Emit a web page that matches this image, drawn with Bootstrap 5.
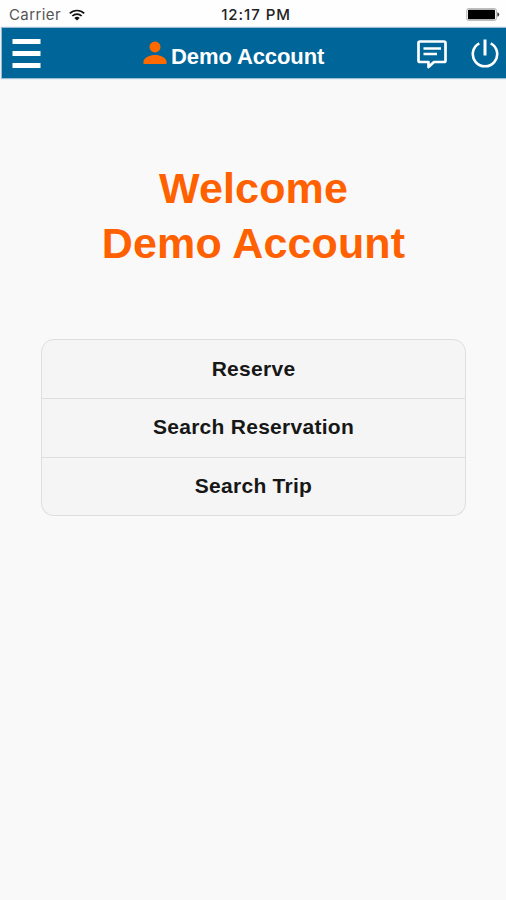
<!DOCTYPE html>
<html lang="en">
<head>
<meta charset="utf-8">
<meta name="viewport" content="width=device-width, initial-scale=1">
<title>Demo Account</title>
<link href="https://cdn.jsdelivr.net/npm/bootstrap@5.3.0/dist/css/bootstrap.min.css" rel="stylesheet">
<style>
body{background:#f9f9f9;font-family:"Liberation Sans",Arial,sans-serif;min-height:900px;overflow:hidden}
svg{display:block}
.status-bar{height:28px;background:#fefefe;display:grid;grid-template-columns:1fr auto 1fr;padding:1px 6px 0 9px;font-family:Inter,Roboto,sans-serif;font-size:15px;color:#555;line-height:26px}
.clock{font-size:15px;font-weight:500;color:#222;letter-spacing:.95px;padding:1px 0 0 3px;line-height:25px}
.carrier{letter-spacing:.4px}
.app-bar{height:50px;margin-left:2px;background:#069;box-shadow:0 0 1px 1px #9cbdd2;display:grid;grid-template-columns:131px auto 1fr;padding:2px 7px 0 10px}
.app-title{font-size:22px;line-height:24px;letter-spacing:-.1px;padding-top:6px}
.app-bar .btn{border:0}
.menu-toggle{margin-top:-2px}
.welcome{color:#ff6000;font-size:43px;line-height:55px;padding:83px 0 0 1px;margin:0;letter-spacing:.12px}
.menu-list{margin:68px 40px 0 41px;--bs-list-group-bg:#f5f5f5;--bs-list-group-border-color:#dedede;--bs-list-group-border-radius:13px;--bs-list-group-action-hover-bg:#ededed}
.menu-list .list-group-item{height:58.500px;padding:0;line-height:55px;font-size:21px;letter-spacing:.28px;color:#171717}
.menu-list .list-group-item:first-child{height:60px;line-height:57px}
</style>
<script src="https://cdn.jsdelivr.net/npm/bootstrap@5.3.0/dist/js/bootstrap.bundle.min.js"></script>
</head>
<body>
<header>
  <div class="status-bar">
    <div class="d-flex align-items-center gap-2"><span class="carrier">Carrier</span>
      <svg width="16" height="12" viewBox="0 0 16 12" fill="none" stroke="#111" stroke-width="1.700"><path d="M.8 4.400C4.800.5 11.200.5 15.200 4.400M3.300 7C6 4.500 10 4.500 12.700 7"/><path d="M8 11.600 5.300 8.900Q8 6.800 10.700 8.900Z" fill="#111" stroke="none"/></svg>
    </div>
    <div class="clock">12:17 PM</div>
    <div class="d-flex align-items-center justify-content-end">
      <svg width="34" height="13" viewBox="0 0 34 13"><rect x=".8" y=".7" width="29.500" height="11.600" rx="1.500" fill="#fff" stroke="#999" stroke-width=".8"/><rect x="2" y="1.800" width="27" height="9.400" rx=".6"/><path d="M31.300 4.200q2 .4 2 2.300t-2 2.300z" fill="#444"/></svg>
    </div>
  </div>
  <nav class="app-bar align-items-center text-white">
    <button class="btn p-0 text-white d-flex menu-toggle" aria-label="Menu">
      <svg width="29" height="32" viewBox="0 0 29 32" fill="currentColor"><path d="M.5 2h28v5H.5zM.5 14h28v5H.5zM.5 26h28v5H.5z"/></svg>
    </button>
    <div class="d-flex align-items-center">
      <svg class="me-1 mb-1" width="24" height="24" viewBox="0 0 24 24" fill="#ff6a00"><circle cx="12" cy="6.900" r="5.500"/><path d="M.5 24v-2.200C.5 17.500 7.200 15 12 15s11.500 2.500 11.500 6.800V24z"/></svg>
      <span class="app-title fw-bold">Demo Account</span>
    </div>
    <div class="d-flex align-items-center justify-content-end gap-4">
      <button class="btn p-0 text-white" aria-label="Messages">
        <svg width="30" height="30" viewBox="0 0 30 30" fill="none" stroke="currentColor" stroke-width="2.700" stroke-linejoin="round"><path d="M3 2.500h24q1.500 0 1.500 1.500v17.500Q28.500 23 27 23H17l-5.500 5V23H3q-1.500 0-1.500-1.500V4Q1.500 2.500 3 2.500z"/><path d="M6.500 9.500h17.500M6.500 15h13.500" stroke-width="2.500"/></svg>
      </button>
      <button class="btn p-0 text-white" aria-label="Log out">
        <svg width="28" height="30" viewBox="0 0 28 30" fill="none" stroke="currentColor" stroke-width="2.600"><path d="M14 .5v16" stroke-width="3"/><path d="M8.300 4.300A12.200 12.200 0 1 0 19.700 4.300"/></svg>
      </button>
    </div>
  </nav>
</header>
<main>
  <h1 class="welcome text-center fw-bold">Welcome<br>Demo Account</h1>
  <div class="list-group menu-list text-center fw-bold">
    <a href="#" class="list-group-item list-group-item-action">Reserve</a>
    <a href="#" class="list-group-item list-group-item-action">Search Reservation</a>
    <a href="#" class="list-group-item list-group-item-action">Search Trip</a>
  </div>
</main>
</body>
</html>
